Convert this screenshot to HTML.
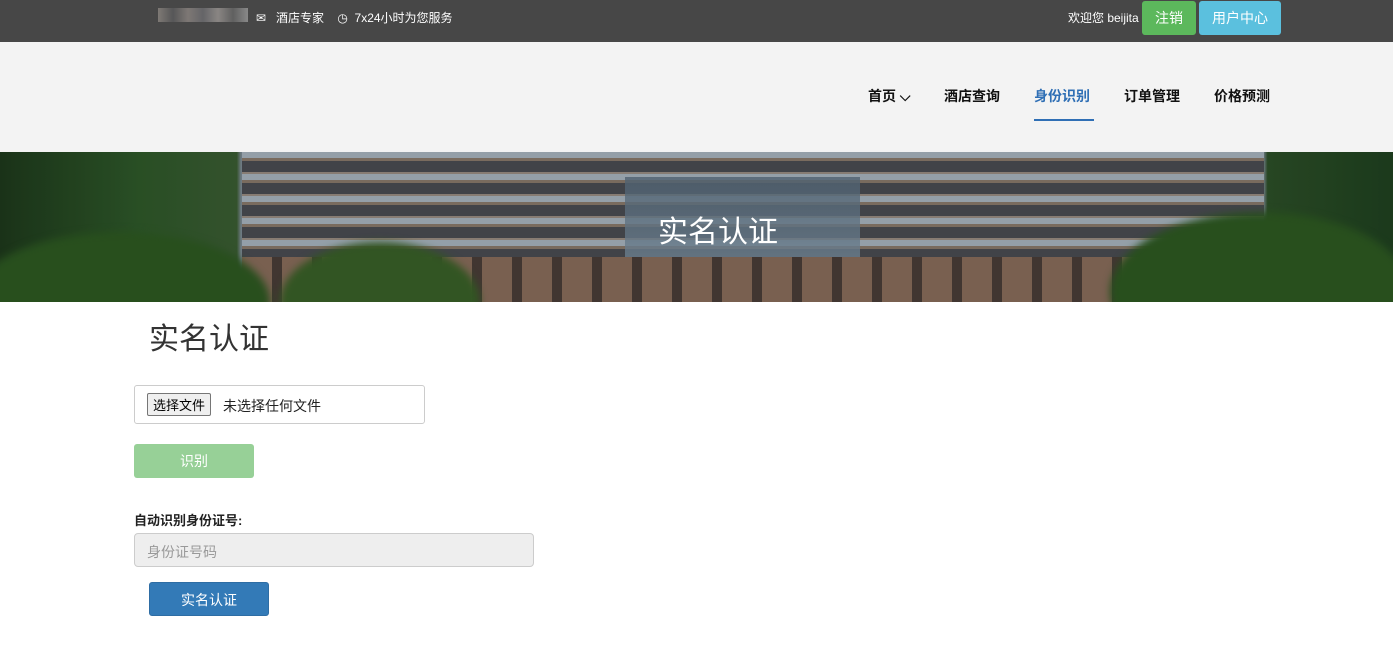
<!DOCTYPE html>
<html><head><meta charset="utf-8"><style>
*{margin:0;padding:0;box-sizing:border-box}
body{width:1393px;height:654px;overflow:hidden;background:#fff;font-family:"Liberation Sans","Noto Sans CJK SC",sans-serif;color:#333}
.top{position:absolute;left:0;top:0;width:1393px;height:42px;background:#474747;color:#fff;font-size:12px}
.top .t{position:absolute;top:9px;white-space:nowrap}
.btn{position:absolute;border-radius:3px;color:#fff;text-align:center}
.nav{position:absolute;top:42px;left:0;width:1393px;height:110px;background:#f3f3f3}
.nav span{position:absolute;top:44px;font-size:14px;font-weight:bold;color:#111}
.banner{position:absolute;top:152px;left:0;width:1393px;height:150px;overflow:hidden;
background:linear-gradient(90deg,#1e3a1c 0,#2f5a2a 10%,#3b5e33 17%,transparent 17.3%,transparent 90.7%,#2d5028 91%,#1f4220 100%),#7d8b94}
.bld{position:absolute;left:242px;top:0;width:1022px;height:150px;
background:repeating-linear-gradient(180deg,#a9b6c0 0 6px,#8a7a6c 6px 9px,#4a4d52 9px 20px,#9a8e83 20px 22px),#888}
.base{position:absolute;left:242px;top:105px;width:1022px;height:45px;background:repeating-linear-gradient(90deg,#8a6e5c 0 30px,#4a3e38 30px 40px)}
.tree{position:absolute;border-radius:50%;background:#2e5a22;filter:blur(4px)}
.glass{position:absolute;left:625px;top:25px;width:235px;height:80px;background:linear-gradient(#5a6e80,#7a90a2);opacity:.8}
</style></head><body>
<div class="top">
<div class="t" style="left:158px;top:8px;width:90px;height:14px;background:linear-gradient(90deg,#8c8680,#5a5a5c,#8b8480,#6c6c70,#9a9592,#666,#999);opacity:.8"></div>
<div class="t" style="left:256px">✉&nbsp;&nbsp; 酒店专家&nbsp;&nbsp;&nbsp; ◷&nbsp; 7x24小时为您服务</div>
<div class="t" style="left:1068px">欢迎您 beijita</div>
<div class="btn" style="left:1142px;top:1px;width:54px;height:34px;background:#5cb85c;line-height:34px;font-size:14px">注销</div>
<div class="btn" style="left:1199px;top:1px;width:82px;height:34px;background:#5bc0de;line-height:34px;font-size:14px">用户中心</div>
</div>
<div class="nav">
<span style="left:868px">首页 ⌵</span>
<span style="left:944px">酒店查询</span>
<span style="left:1034px;color:#2f6fb5">身份识别</span>
<div style="position:absolute;left:1034px;top:77px;width:60px;height:2px;background:#2f6fb5"></div>
<span style="left:1124px">订单管理</span>
<span style="left:1214px">价格预测</span>
</div>
<div class="banner">
<div class="bld"></div><div class="glass"></div><div class="base"></div>
<div class="tree" style="left:-30px;top:80px;width:300px;height:140px"></div>
<div class="tree" style="left:280px;top:90px;width:200px;height:120px;background:#3a6128"></div>
<div class="tree" style="left:1110px;top:60px;width:300px;height:160px"></div>
<div style="position:absolute;left:0;top:0;width:1393px;height:150px;background:rgba(0,0,0,.12)"></div>
<div style="position:absolute;left:658px;top:55px;font-size:30px;color:#fff">实名认证</div>
</div>
<div style="position:absolute;left:149px;top:314px;font-size:30px;color:#333">实名认证</div>
<div style="position:absolute;left:134px;top:385px;width:291px;height:39px;border:1px solid #ccc;border-radius:3px;font-size:14px">
<span style="position:absolute;left:12px;top:7px;border:1px solid #767676;background:#efefef;padding:1px 5px;border-radius:2px;font-size:13px;color:#000">选择文件</span>
<span style="position:absolute;left:88px;top:10px;color:#222">未选择任何文件</span></div>
<div class="btn" style="left:134px;top:444px;width:120px;height:34px;background:#97d097;line-height:34px;font-size:14px">识别</div>
<div style="position:absolute;left:134px;top:510px;font-size:13px;font-weight:bold;color:#222">自动识别身份证号:</div>
<div style="position:absolute;left:134px;top:533px;width:400px;height:34px;border:1px solid #ccc;border-radius:4px;background:#eee;font-size:14px;color:#999;padding:8px 12px">身份证号码</div>
<div class="btn" style="left:149px;top:582px;width:120px;height:34px;background:#337ab7;line-height:34px;font-size:14px;border:1px solid #2e6da4">实名认证</div>
</body></html>
